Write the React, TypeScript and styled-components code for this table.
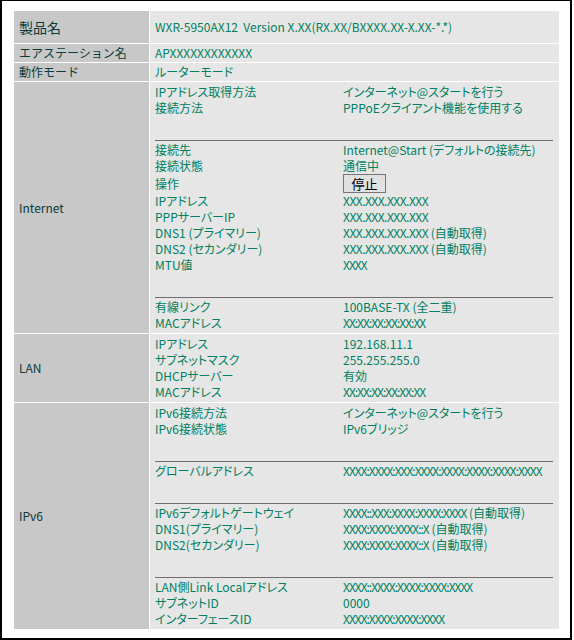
import React from "react";
import styled, { createGlobalStyle } from "styled-components";

const GlobalStyle = createGlobalStyle`
  html, body {
    margin: 0;
    padding: 0;
    background: #ffffff;
  }
  body {
    font-family: "Noto Sans CJK JP", "Noto Sans", sans-serif;
  }
`;

const Frame = styled.div`
  box-sizing: border-box;
  width: 572px;
  height: 640px;
  border: 2px solid #000000;
  border-top-width: 1px;
  padding: 10px 11px 0 12px;
  background: #ffffff;
`;

const InfoTable = styled.div`
  display: grid;
  grid-template-columns: 135px 409px;
  grid-template-rows: 32px auto auto auto auto auto;
  gap: 1px;
`;

const LabelCell = styled.div<{ $large?: boolean }>`
  display: flex;
  align-items: center;
  padding-left: 5px;
  background: #c8c8c8;
  color: #0a3c3c;
  font-size: ${(p) => (p.$large ? "14px" : "12px")};
  line-height: 16px;
  white-space: nowrap;
`;

const ValueCell = styled.div<{ $pad?: number }>`
  display: flex;
  flex-direction: column;
  justify-content: center;
  padding: ${(p) => p.$pad ?? 1}px 6px ${(p) => p.$pad ?? 1}px 5px;
  background: #e6e6e6;
  color: #008060;
  font-size: 12px;
  line-height: 16px;
  font-feature-settings: "palt";
  white-space: nowrap;
`;

const Details = styled.div`
  display: grid;
  grid-template-columns: 188px 210px;
  align-items: center;
`;

const Key = styled.div<{ $h?: number }>`
  height: ${(p) => p.$h ?? 16}px;
  line-height: ${(p) => p.$h ?? 16}px;
  white-space: nowrap;
`;

const Val = styled.div<{ $h?: number }>`
  height: ${(p) => p.$h ?? 16}px;
  line-height: ${(p) => p.$h ?? 16}px;
  white-space: pre;
  display: flex;
  align-items: center;
`;

const Addr = styled.span<{ $dotted?: boolean }>`
  letter-spacing: ${(p) => (p.$dotted ? "-0.5px" : "-1px")};
`;

const Spacer = styled.div`
  grid-column: 1 / -1;
  height: 16px;
`;

const Divider = styled.div`
  grid-column: 1 / -1;
  height: 1px;
  margin: 8px 0 1px;
  background: #6e6e6e;
`;

const StopButton = styled.button`
  box-sizing: border-box;
  width: 43px;
  height: 19px;
  padding: 0;
  margin: 0;
  border: 1px solid #767676;
  border-radius: 0;
  background: #e1e1e1;
  color: #000000;
  font-family: "Noto Sans CJK JP", sans-serif;
  font-size: 13px;
  line-height: 17px;
`;

type Row = { k: string; v: React.ReactNode; h?: number };
type Group = Row[];

const ip = <Addr $dotted>XXX.XXX.XXX.XXX</Addr>;
const mac = <Addr>XX:XX:XX:XX:XX:XX</Addr>;

const internet: Group[] = [
  [
    { k: "IPアドレス取得方法", v: "インターネット@スタートを行う" },
    { k: "接続方法", v: "PPPoEクライアント機能を使用する" },
  ],
  [
    { k: "接続先", v: "Internet@Start (デフォルトの接続先)" },
    { k: "接続状態", v: "通信中" },
    { k: "操作", v: <StopButton type="button">停止</StopButton>, h: 19 },
    { k: "IPアドレス", v: ip },
    { k: "PPPサーバーIP", v: ip },
    { k: "DNS1 (プライマリー)", v: <>{ip} (自動取得)</> },
    { k: "DNS2 (セカンダリー)", v: <>{ip} (自動取得)</> },
    { k: "MTU値", v: <Addr>XXXX</Addr> },
  ],
  [
    { k: "有線リンク", v: "100BASE-TX (全二重)" },
    { k: "MACアドレス", v: mac },
  ],
];

const lan: Group[] = [
  [
    { k: "IPアドレス", v: "192.168.11.1" },
    { k: "サブネットマスク", v: "255.255.255.0" },
    { k: "DHCPサーバー", v: "有効" },
    { k: "MACアドレス", v: mac },
  ],
];

const ipv6: Group[] = [
  [
    { k: "IPv6接続方法", v: "インターネット@スタートを行う" },
    { k: "IPv6接続状態", v: "IPv6ブリッジ" },
  ],
  [{ k: "グローバルアドレス", v: <Addr>XXXX:XXXX:XXX:XXXX:XXXX:XXXX:XXXX:XXXX</Addr> }],
  [
    { k: "IPv6デフォルトゲートウェイ", v: <><Addr>XXXX::XXX:XXXX:XXXX:XXXX</Addr> (自動取得)</> },
    { k: "DNS1(プライマリー)", v: <><Addr>XXXX:XXXX:XXXX::X</Addr> (自動取得)</> },
    { k: "DNS2(セカンダリー)", v: <><Addr>XXXX:XXXX:XXXX::X</Addr> (自動取得)</> },
  ],
  [
    { k: "LAN側Link Localアドレス", v: <Addr>XXXX::XXXX:XXXX:XXXX:XXXX</Addr> },
    { k: "サブネットID", v: "0000" },
    { k: "インターフェースID", v: <Addr>XXXX:XXXX:XXXX:XXXX</Addr> },
  ],
];

function DetailList({ groups }: { groups: Group[] }) {
  return (
    <Details>
      {groups.map((g, gi) => (
        <React.Fragment key={gi}>
          {gi > 0 && (
            <>
              <Spacer />
              <Divider />
            </>
          )}
          {g.map((r, ri) => (
            <React.Fragment key={ri}>
              <Key $h={r.h}>{r.k}</Key>
              <Val $h={r.h}>{r.v}</Val>
            </React.Fragment>
          ))}
        </React.Fragment>
      ))}
    </Details>
  );
}

export default function App() {
  return (
    <>
      <GlobalStyle />
      <Frame>
        <InfoTable>
          <LabelCell $large>製品名</LabelCell>
          <ValueCell>
            WXR-5950AX12{"\u00a0\u00a0"}Version X.XX(RX.XX/BXXXX.XX-X.XX-*.*)
          </ValueCell>

          <LabelCell>エアステーション名</LabelCell>
          <ValueCell>APXXXXXXXXXXXX</ValueCell>

          <LabelCell>動作モード</LabelCell>
          <ValueCell>ルーターモード</ValueCell>

          <LabelCell>Internet</LabelCell>
          <ValueCell $pad={2}>
            <DetailList groups={internet} />
          </ValueCell>

          <LabelCell>LAN</LabelCell>
          <ValueCell $pad={2}>
            <DetailList groups={lan} />
          </ValueCell>

          <LabelCell>IPv6</LabelCell>
          <ValueCell $pad={2}>
            <DetailList groups={ipv6} />
          </ValueCell>
        </InfoTable>
      </Frame>
    </>
  );
}
